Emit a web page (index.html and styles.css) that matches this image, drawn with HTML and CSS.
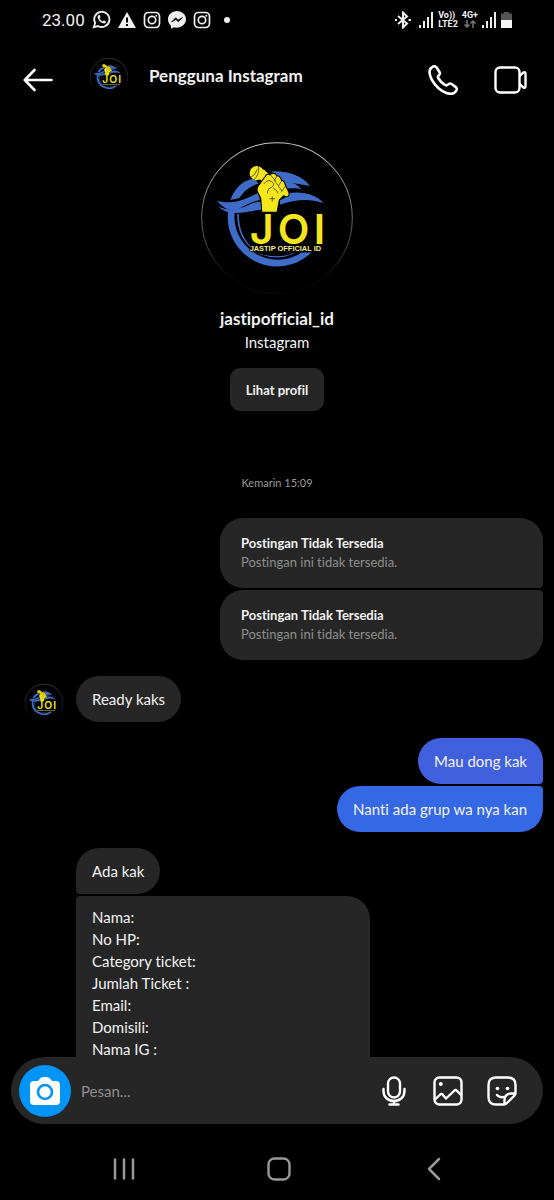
FILE: index.html
```html
<!DOCTYPE html>
<html lang="id">
<head>
    <meta charset="UTF-8">
    <meta name="viewport" content="width=device-width, initial-scale=1.0">
    <title>Pengguna Instagram</title>
    <link rel="stylesheet" href="styles.css">
</head>
<body>
    <div class="status-bar">
        <div class="status-left">
            <span class="clock">23.00</span>
            <svg width="19" height="19" viewBox="0 0 20 20" fill="none" stroke="#eee" stroke-width="2">
                <path d="M2 18L3.3 13.6A8 8 0 1 1 6.4 16.8Z"/>
                <path d="M7 5.2Q5 7 6.2 9C7.6 12 10 14 12.7 14.2Q14.9 13.8 14.7 12L12.5 10.8L11.2 12.1Q8.8 11 8 8.7L9 7.5L8.2 5.3Z" fill="#eee" stroke="none"/>
            </svg>
            <svg width="18" height="18" viewBox="0 0 18 18">
                <path d="M9 1L18 17H0Z" fill="#eee"/>
                <path d="M9 6.5V11.5M9 13V15" stroke="#000" stroke-width="2"/>
            </svg>
            <svg width="18" height="18" viewBox="0 0 18 18" fill="none" stroke="#eee" stroke-width="1.7">
                <rect x="1.5" y="1.5" width="15" height="15" rx="4"/>
                <circle cx="9" cy="9" r="3.7"/>
                <circle cx="13.3" cy="4.7" r="1" fill="#eee" stroke="none"/>
            </svg>
            <svg width="18" height="18" viewBox="0 0 18 18">
                <path d="M9 0C4 0 0 3.6 0 8.3C0 11 1.2 13.2 3 14.7V17.7L5.8 16.3C11.9 18 18 14 18 8.3C18 3.6 14 0 9 0Z" fill="#eee"/>
                <path d="M3.5 11L7.7 6.7L10.1 9L14.5 6.4L10.3 10.8L7.9 8.5Z" fill="#000" stroke="#000" stroke-width=".6"/>
            </svg>
            <svg width="18" height="18" viewBox="0 0 18 18" fill="none" stroke="#eee" stroke-width="1.7">
                <rect x="1.5" y="1.5" width="15" height="15" rx="4"/>
                <circle cx="9" cy="9" r="3.7"/>
                <circle cx="13.3" cy="4.7" r="1" fill="#eee" stroke="none"/>
            </svg>
            <span class="dot"></span>
        </div>
        <div class="status-right">
            <svg width="16" height="18" viewBox="0 0 16 18" fill="none" stroke="#eee" stroke-width="2">
                <path d="M3 5L12 12.5L8 16.5V1.5L12 5.5L3 13M0 9H2M13.5 9H16"/>
            </svg>
            <svg width="15" height="16" viewBox="0 0 15 16" fill="#eee">
                <path d="M0 13H2V16H0ZM4 9H6V16H4ZM8 5H10V16H8ZM12 0H14V16H12Z"/>
            </svg>
            <span class="network">Vo))<br>LTE2</span>
            <span class="network">4G+
                <svg width="12" height="8" viewBox="0 0 12 8" fill="none" stroke="#777" stroke-width="1.5">
                    <path d="M3 0V7M0.5 4.5L3 7L5.5 4.5M9 8V1M6.5 3.5L9 1L11.5 3.5"/>
                </svg>
            </span>
            <svg width="15" height="16" viewBox="0 0 15 16" fill="#eee">
                <path d="M0 13H2V16H0ZM4 9H6V16H4ZM8 5H10V16H8ZM12 0H14V16H12Z"/>
            </svg>
            <svg width="11" height="16" viewBox="0 0 11 16">
                <path d="M3 0H8V1.5H11V8H0V1.5H3Z" fill="#555"/>
                <path d="M0 8H11V16H0Z" fill="#f4f4f4"/>
            </svg>
        </div>
    </div>

    <header class="chat-header">
        <button class="icon-button" type="button" aria-label="Kembali">
            <svg width="30" height="24" viewBox="0 0 30 24" fill="none" stroke="#fff" stroke-width="2.6" stroke-linecap="round" stroke-linejoin="round">
                <path d="M28.5 12H2M11.5 2L1.8 12L11.5 22"/>
            </svg>
        </button>
        <svg class="avatar header-avatar" viewBox="37 39 450 450"><use href="#logo"/></svg>
        <h1>Pengguna Instagram</h1>
        <button class="icon-button" type="button" aria-label="Telepon">
            <svg width="30" height="30" viewBox="0 0 30 30" fill="none" stroke="#fff" stroke-width="2.6" stroke-linejoin="round">
                <path d="M4.8 1.7Q2.2 3 1.6 6.1C1 11 5 18.5 10.5 23.2C15.3 27.3 21.8 30 25.7 28.3Q28 27 28.7 24.7Q29.1 23.2 27.8 22.1L23.6 19Q22.2 18.1 20.8 19L19 20.1Q18 20.7 16.7 19.8Q12.5 17 10.2 13Q9.5 11.8 10.4 10.9L11.5 9.5Q12.3 8.4 11.6 7.2L8.8 2.7Q7.2 .5 4.8 1.7Z"/>
            </svg>
        </button>
        <button class="icon-button" type="button" aria-label="Panggilan video">
            <svg width="33" height="28" viewBox="0 0 33 28" fill="none" stroke="#fff" stroke-width="2.4" stroke-linejoin="round">
                <rect x="1.5" y="1.5" width="24" height="25" rx="4.5"/>
                <path d="M25.5 10L29.2 6.6Q31.5 5.2 31.5 8V20Q31.5 22.8 29.2 21.4L25.5 18"/>
            </svg>
        </button>
    </header>

    <main class="chat">
        <section class="profile">
            <svg class="avatar profile-avatar" viewBox="37 39 450 450">
                <defs>
                    <linearGradient id="ring" x1="0" y1="0" x2="0" y2="1">
                        <stop offset="0" stop-color="#ccc"/>
                        <stop offset="0.6" stop-color="#555"/>
                        <stop offset="0.9" stop-color="#080808"/>
                    </linearGradient>
                </defs>
                <g id="logo">
                    <circle cx="262" cy="264" r="223" fill="#000" stroke="url(#ring)" stroke-width="3"/>
                    <g fill="#3f6cc9">
                        <path d="M117 246A146 146 0 0 0 364 366L335 366A128 128 0 0 1 137 244Z"/>
                        <path d="M84 213C120 223 149 216 177 203L206 190L212 211C187 215 170 225 151 236Q117 252 84 213Z"/>
                        <path d="M88 229C116 244 150 240 179 225Q199 215 218 216V239C180 243 139 257 108 243Q95 238 88 229Z"/>
                        <path d="M124 211C137 173 164 151 194 148L208 162C181 170 162 186 151 205Z"/>
                        <path d="M246 126C294 124 336 138 360 170C330 163 307 161 284 160L260 141Z"/>
                        <path d="M280 158C307 155 321 164 335 179C314 173 300 177 286 177Z"/>
                        <path d="M298 190C337 184 379 194 400 220C356 206 317 209 270 225V211Q286 207 298 190Z"/>
                        <path d="M144 252C144 302 162 340 197 359C164 332 149 299 149 252Z"/>
                        <path d="M200 366Q263 389 321 365Q264 396 200 366Z"/>
                    </g>
                    <g fill="#f5e51b">
                        <path d="M207 148L228 160L246 141L222 120Z"/>
                        <circle cx="202" cy="131" r="21"/>
                        <path d="M217 247L214 207L203 183Q201 176 207 168L227 141Q232 131 241 136Q253 126 262 139Q272 140 275 152Q285 154 286 165L297 188Q300 196 294 200Q288 203 282 198L269 211L262 247Z" stroke="#000" stroke-width="3"/>
                    </g>
                    <path d="M193 151Q212 136 207 111M185 143Q199 137 203 121M224 162Q236 147 247 157Q258 165 246 173Q233 177 234 190M243 137L258 154M262 140L254 153L265 167M276 154L266 169L276 183M286 170L275 187M252 176Q262 181 265 190M241 207H255M248 202V214" fill="none" stroke="#222" stroke-width="2" stroke-linecap="round"/>
                    <text class="logo-name" y="341" x="181 264 371">JOI</text>
                    <text class="logo-caption" x="181" y="362">JASTIP OFFICIAL ID</text>
                </g>
            </svg>
            <h2>jastipofficial_id</h2>
            <p>Instagram</p>
            <button class="profile-button" type="button">Lihat profil</button>
        </section>

        <time class="timestamp">Kemarin 15:09</time>

        <div class="group sent">
            <div class="bubble post">
                <strong>Postingan Tidak Tersedia</strong>
                <p>Postingan ini tidak tersedia.</p>
            </div>
            <div class="bubble post">
                <strong>Postingan Tidak Tersedia</strong>
                <p>Postingan ini tidak tersedia.</p>
            </div>
        </div>

        <div class="received-row">
            <svg class="avatar" viewBox="37 39 450 450"><use href="#logo"/></svg>
            <div class="group received">
                <div class="bubble">Ready kaks</div>
            </div>
        </div>

        <div class="group sent">
            <div class="bubble violet">Mau dong kak</div>
            <div class="bubble blue">Nanti ada grup wa nya kan</div>
        </div>

        <div class="received-row">
            <div class="avatar"></div>
            <div class="group received">
                <div class="bubble">Ada kak</div>
                <div class="bubble order-form">Nama:<br>No HP:<br>Category ticket:<br>Jumlah Ticket :<br>Email:<br>Domisili:<br>Nama IG :</div>
            </div>
        </div>
    </main>

    <form class="composer">
        <button class="camera" type="button" aria-label="Kamera">
            <svg width="32" height="28" viewBox="0 0 32 28">
                <path d="M5 4H9L11 1.5Q12 0 14 0H18Q20 0 21 1.5L23 4H27Q31 4 31 8V24Q31 28 27 28H5Q1 28 1 24V8Q1 4 5 4Z" fill="#fff"/>
                <circle cx="16" cy="15" r="7" fill="none" stroke="#0095f6" stroke-width="2.6"/>
            </svg>
        </button>
        <input type="text" placeholder="Pesan..." aria-label="Pesan">
        <button class="icon-button" type="button" aria-label="Pesan suara">
            <svg width="30" height="30" viewBox="0 0 30 30" fill="none" stroke="#fff" stroke-width="2.4" stroke-linecap="round">
                <rect x="9" y="1.5" width="12" height="20" rx="6"/>
                <path d="M4.5 13V15C4.5 21 9 25 15 25S25.5 21 25.5 15V13M15 25V28.5M10.5 28.5H19.5"/>
            </svg>
        </button>
        <button class="icon-button" type="button" aria-label="Galeri">
            <svg width="30" height="30" viewBox="0 0 30 30" fill="none" stroke="#fff" stroke-width="2.4" stroke-linejoin="round">
                <rect x="1.5" y="1.5" width="27" height="27" rx="5"/>
                <path d="M2 23.5L7.2 18.5Q8.5 17.5 9.7 18.7L13 22.5L21.5 14.5Q22.7 13.5 23.8 14.7L28.5 19.5"/>
                <circle cx="7.8" cy="8" r="2" fill="#fff" stroke="none"/>
            </svg>
        </button>
        <button class="icon-button" type="button" aria-label="Stiker">
            <svg width="30" height="30" viewBox="0 0 30 30" fill="none" stroke="#fff" stroke-width="2.4" stroke-linecap="round" stroke-linejoin="round">
                <path d="M17 28.5H9Q1.5 28.5 1.5 21V9Q1.5 1.5 9 1.5H21Q28.5 1.5 28.5 9V17Q28.5 18.5 27.5 19.5L19.5 27.5Q18.5 28.5 17 28.5ZM17.5 28V23Q18.5 17.7 24 17.5H28M10 19Q13 22.5 18 20.5"/>
                <circle cx="10.5" cy="12.5" r="1.8" fill="#fff" stroke="none"/>
                <circle cx="20.5" cy="12.5" r="1.8" fill="#fff" stroke="none"/>
            </svg>
        </button>
    </form>

    <nav class="system-nav">
        <button class="icon-button" type="button" aria-label="Aplikasi terbaru">
            <svg width="22" height="24" viewBox="0 0 22 24" stroke="#999" stroke-width="2.5" stroke-linecap="round">
                <path d="M2 2.5V21.5M11 2.5V21.5M20 2.5V21.5"/>
            </svg>
        </button>
        <button class="icon-button" type="button" aria-label="Beranda">
            <svg width="24" height="24" viewBox="0 0 24 24" fill="none" stroke="#999" stroke-width="2.4">
                <rect x="1.5" y="1.5" width="21" height="21" rx="6"/>
            </svg>
        </button>
        <button class="icon-button" type="button" aria-label="Kembali">
            <svg width="14" height="24" viewBox="0 0 14 24" fill="none" stroke="#999" stroke-width="2.5" stroke-linecap="round" stroke-linejoin="round">
                <path d="M12 2L2 12L12 22"/>
            </svg>
        </button>
    </nav>
</body>
</html>
```

FILE: styles.css
```css
body, h1, h2, p, button, input {
    margin: 0;
    padding: 0;
    box-sizing: border-box;
}

body {
    display: flex;
    flex-direction: column;
    height: 100vh;
    overflow: hidden;
    font-family: Lato, "Open Sans", sans-serif;
    font-size: 15px;
    font-variant-ligatures: none;
    line-height: 22px;
    color: #f2f2f2;
    background-color: #000;
}

svg {
    display: block;
    flex-shrink: 0;
}

.logo-name {
    font-family: Inter, sans-serif;
    font-size: 122px;
    font-weight: 600;
    fill: #f5e51b;
}

.logo-caption {
    font-family: "Liberation Sans", sans-serif;
    font-size: 22px;
    font-weight: bold;
    fill: #f5e98a;
    stroke: #000;
    stroke-width: 4px;
    paint-order: stroke;
}

button {
    font: inherit;
    color: inherit;
    border: none;
    background: none;
    cursor: pointer;
}

.icon-button {
    flex-shrink: 0;
}

/* Status bar */
.status-bar {
    display: flex;
    justify-content: space-between;
    align-items: center;
    height: 39px;
    padding: 0 42px;
    flex-shrink: 0;
}

.status-left {
    display: flex;
    align-items: center;
    gap: 7px;
}

.clock {
    font-family: Roboto, sans-serif;
    font-size: 17px;
}

.dot {
    width: 6px;
    height: 6px;
    margin-left: 6px;
    border-radius: 50%;
    background-color: #eee;
}

.status-right {
    display: flex;
    align-items: center;
    gap: 4px;
}

.status-right > svg:first-child {
    margin-right: 4px;
}

.network {
    display: flex;
    flex-direction: column;
    align-items: center;
    font-family: Roboto, sans-serif;
    font-size: 9px;
    font-weight: bold;
    line-height: 9px;
}

/* Header */
.chat-header {
    display: flex;
    align-items: center;
    height: 81px;
    padding: 0 27px 0 23px;
    flex-shrink: 0;
}

.header-avatar {
    margin: 0 21px 6px 37px;
}

.chat-header h1 {
    flex: 1;
    padding-bottom: 8px;
    font-size: 17px;
    font-weight: bold;
}

.chat-header .icon-button:last-child {
    margin-left: 36px;
}

.avatar {
    width: 38px;
    height: 38px;
    flex-shrink: 0;
}

/* Conversation */
.chat {
    display: flex;
    flex-direction: column;
    flex: 1;
    min-height: 0;
    gap: 16px;
    padding: 22px 11px 0;
    overflow: hidden;
}

.chat > * {
    flex-shrink: 0;
}

.profile {
    display: flex;
    flex-direction: column;
    align-items: center;
}

.profile-avatar {
    width: 152px;
    height: 152px;
    margin-bottom: 13px;
}

.profile h2 {
    font-size: 17px;
    font-weight: bold;
    line-height: 24px;
}

.profile-button {
    height: 43px;
    margin-top: 15px;
    padding: 0 16px;
    font-size: 13px;
    font-weight: bold;
    border-radius: 10px;
    background-color: #262626;
}

.timestamp {
    margin: 45px 0 8px;
    font-size: 11px;
    text-align: center;
    color: #999;
}

.group {
    display: flex;
    flex-direction: column;
    gap: 2px;
}

.sent {
    align-items: flex-end;
}

.received {
    align-items: flex-start;
}

.received-row {
    display: flex;
    align-items: flex-end;
    gap: 13px;
    padding-left: 14px;
}

.bubble {
    padding: 12px 16px;
    border-radius: 23px;
    background-color: #262626;
}

.sent .bubble:first-child {
    border-bottom-right-radius: 4px;
}

.sent .bubble:last-child {
    border-top-right-radius: 4px;
}

.received .bubble:not(:last-child) {
    border-bottom-left-radius: 4px;
}

.post {
    width: 323px;
    max-width: 100%;
    padding: 16px 21px;
    box-sizing: border-box;
    font-size: 13px;
    line-height: 19px;
}

.post p {
    color: #8e8e8e;
}

.violet {
    background-color: #4160de;
}

.blue {
    background-color: #3568e4;
}

.received .order-form {
    width: 294px;
    padding-top: 10px;
    box-sizing: border-box;
    border-radius: 4px 23px 0 0;
}

/* Message box */
.composer {
    display: flex;
    align-items: center;
    gap: 24px;
    height: 67px;
    margin: 0 11px;
    padding: 0 26px 0 8px;
    flex-shrink: 0;
    border-radius: 34px;
    background-color: #262626;
}

.camera {
    display: flex;
    align-items: center;
    justify-content: center;
    width: 52px;
    height: 52px;
    flex-shrink: 0;
    border-radius: 50%;
    background-color: #0095f6;
}

.composer input {
    flex: 1;
    min-width: 0;
    margin-left: -14px;
    font: inherit;
    color: #f2f2f2;
    border: none;
    outline: none;
    background: none;
}

.composer input::placeholder {
    color: #8e8e8e;
}

/* System navigation */
.system-nav {
    display: grid;
    grid-template-columns: repeat(3, 1fr);
    justify-items: center;
    align-items: center;
    height: 76px;
    padding: 14px 43px 0 47px;
    box-sizing: border-box;
    flex-shrink: 0;
}
```
